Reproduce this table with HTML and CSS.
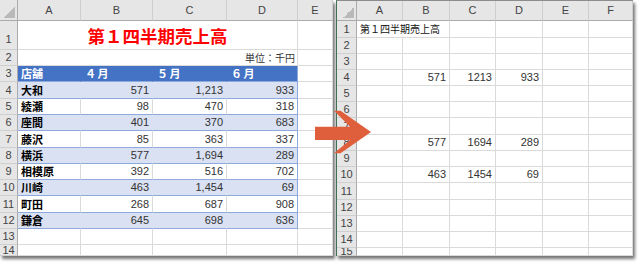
FILE: index.html
```html
<!DOCTYPE html>
<html lang="ja">
<head>
<meta charset="utf-8">
<title>第１四半期売上高</title>
<link rel="stylesheet" href="styles.css">
</head>
<body>
<div class="stage">
  <div class="sheet left">
    <div class="c h corner"></div><div class="c h">A</div><div class="c h">B</div><div class="c h">C</div><div class="c h">D</div><div class="c h">E</div>

    <div class="c rh bottom">1</div><div class="c title">第１四半期売上高</div><div class="c"></div>
    <div class="c rh">2</div><div class="c unit">単位：千円</div><div class="c"></div>
    <div class="c rh">3</div><div class="c tb">店舗</div><div class="c tb mo">４月</div><div class="c tb mo">５月</div><div class="c tb mo last">６月</div><div class="c"></div>

    <div class="c rh">4</div><div class="c band name">大和</div><div class="c band num">571</div><div class="c band num">1,213</div><div class="c band num last">933</div><div class="c"></div>
    <div class="c rh">5</div><div class="c wr name">綾瀬</div><div class="c wr num">98</div><div class="c wr num">470</div><div class="c wr num last">318</div><div class="c"></div>
    <div class="c rh">6</div><div class="c band name">座間</div><div class="c band num">401</div><div class="c band num">370</div><div class="c band num last">683</div><div class="c"></div>
    <div class="c rh">7</div><div class="c wr name">藤沢</div><div class="c wr num">85</div><div class="c wr num">363</div><div class="c wr num last">337</div><div class="c"></div>
    <div class="c rh">8</div><div class="c band name">横浜</div><div class="c band num">577</div><div class="c band num">1,694</div><div class="c band num last">289</div><div class="c"></div>
    <div class="c rh">9</div><div class="c wr name">相模原</div><div class="c wr num">392</div><div class="c wr num">516</div><div class="c wr num last">702</div><div class="c"></div>
    <div class="c rh">10</div><div class="c band name">川崎</div><div class="c band num">463</div><div class="c band num">1,454</div><div class="c band num last">69</div><div class="c"></div>
    <div class="c rh">11</div><div class="c wr name">町田</div><div class="c wr num">268</div><div class="c wr num">687</div><div class="c wr num last">908</div><div class="c"></div>
    <div class="c rh">12</div><div class="c band name">鎌倉</div><div class="c band num">645</div><div class="c band num">698</div><div class="c band num last">636</div><div class="c"></div>
    <div class="c rh">13</div><div class="c"></div><div class="c"></div><div class="c"></div><div class="c"></div><div class="c"></div>
    <div class="c rh">14</div><div class="c"></div><div class="c"></div><div class="c"></div><div class="c"></div><div class="c"></div>
  </div>

  <div class="sheet right">
    <div class="c h corner"></div><div class="c h">A</div><div class="c h">B</div><div class="c h">C</div><div class="c h">D</div><div class="c h">E</div><div class="c h">F</div>

    <div class="c rh">1</div><div class="c plain wide">第１四半期売上高</div><div class="c"></div><div class="c"></div><div class="c"></div><div class="c"></div>
    <div class="c rh">2</div><div class="c"></div><div class="c"></div><div class="c"></div><div class="c"></div><div class="c"></div><div class="c"></div>
    <div class="c rh">3</div><div class="c"></div><div class="c"></div><div class="c"></div><div class="c"></div><div class="c"></div><div class="c"></div>
    <div class="c rh">4</div><div class="c"></div><div class="c num">571</div><div class="c num">1213</div><div class="c num">933</div><div class="c"></div><div class="c"></div>
    <div class="c rh">5</div><div class="c"></div><div class="c"></div><div class="c"></div><div class="c"></div><div class="c"></div><div class="c"></div>
    <div class="c rh">6</div><div class="c"></div><div class="c"></div><div class="c"></div><div class="c"></div><div class="c"></div><div class="c"></div>
    <div class="c rh">7</div><div class="c"></div><div class="c"></div><div class="c"></div><div class="c"></div><div class="c"></div><div class="c"></div>
    <div class="c rh">8</div><div class="c"></div><div class="c num">577</div><div class="c num">1694</div><div class="c num">289</div><div class="c"></div><div class="c"></div>
    <div class="c rh">9</div><div class="c"></div><div class="c"></div><div class="c"></div><div class="c"></div><div class="c"></div><div class="c"></div>
    <div class="c rh">10</div><div class="c"></div><div class="c num">463</div><div class="c num">1454</div><div class="c num">69</div><div class="c"></div><div class="c"></div>
    <div class="c rh">11</div><div class="c"></div><div class="c"></div><div class="c"></div><div class="c"></div><div class="c"></div><div class="c"></div>
    <div class="c rh">12</div><div class="c"></div><div class="c"></div><div class="c"></div><div class="c"></div><div class="c"></div><div class="c"></div>
    <div class="c rh">13</div><div class="c"></div><div class="c"></div><div class="c"></div><div class="c"></div><div class="c"></div><div class="c"></div>
    <div class="c rh">14</div><div class="c"></div><div class="c"></div><div class="c"></div><div class="c"></div><div class="c"></div><div class="c"></div>
    <div class="c rh">15</div><div class="c"></div><div class="c"></div><div class="c"></div><div class="c"></div><div class="c"></div><div class="c"></div>
  </div>

  <svg class="arrow" width="58" height="44" viewBox="0 0 58 44" aria-hidden="true">
    <polygon points="1,16.7 36,16.7 20,0.7 26.5,0.7 57,22 26.5,43.3 20,43.3 36,30 1,30" fill="#df5f3c"/>
  </svg>
</div>
</body>
</html>
```

FILE: styles.css
```css
html, body {
  margin: 0;
  padding: 0;
  background: #ffffff;
}

body {
  font-family: "Liberation Sans", "Noto Sans CJK JP", sans-serif;
  font-size: 11px;
  color: #222;
}

.stage {
  position: relative;
  width: 640px;
  height: 264px;
  overflow: hidden;
  display: flex;
  align-items: flex-start;
  background: #ffffff;
}

.sheet {
  display: grid;
  height: 256px;
  box-sizing: border-box;
  background: #ffffff;
  overflow: hidden;
  box-shadow: 2px 3px 3px rgba(0, 0, 0, 0.55);
}

.left {
  width: 333px;
  grid-template-columns: 18px 63px 72px 74px 71px 35px;
  grid-template-rows: 21px 29px 16px 16px 17px 16px 16px 17px 16px 16px 16px 17px 16px 16px 1fr;
}

.right {
  margin-left: 3px;
  width: 297px;
  border-left: 1px solid #3f6f55;
  border-top: 1px solid #8c8c8c;
  grid-template-columns: 20px 46px 47px 46px 47px 46px 1fr;
  grid-template-rows: 20px 17px 16px 16px 16px 16px 16px 17px 16px 16px 16px 17px 16px 16px 16px 1fr;
}

.c {
  box-sizing: border-box;
  min-width: 0;
  display: flex;
  align-items: center;
  padding: 0 3px;
  border-right: 1px solid #dadada;
  border-bottom: 1px solid #dadada;
  white-space: nowrap;
  overflow: hidden;
  line-height: 1;
}

.h {
  background: #e6e6e6;
  color: #444;
  justify-content: center;
  border-right-color: #cfcfcf;
  border-bottom-color: #ababab;
}

.rh {
  background: #e6e6e6;
  color: #444;
  justify-content: center;
  padding: 0;
  border-right-color: #ababab;
  border-bottom-color: #cfcfcf;
}

.rh.bottom {
  align-items: flex-end;
  padding-bottom: 4px;
}

.corner {
  border-right-color: #ababab;
  background: linear-gradient(135deg, transparent 50%, #b9b9b9 50%) no-repeat right 2px bottom 2px / 11px 11px, #e6e6e6;
}

.title {
  grid-column: span 4;
  justify-content: center;
  align-items: flex-end;
  padding-bottom: 5px;
  font-family: "Noto Sans CJK JP", sans-serif;
  font-weight: bold;
  font-size: 17.5px;
  color: #ff0000;
  border-right-color: #dadada;
}

.unit {
  grid-column: span 4;
  justify-content: flex-end;
  padding-right: 2px;
  font-family: "Noto Sans CJK JP", sans-serif;
  font-size: 10px;
  color: #333;
}

.tb {
  background: #4472c4;
  color: #ffffff;
  font-family: "Noto Sans CJK JP", sans-serif;
  font-weight: bold;
  border-right-color: #4472c4;
  border-bottom-color: #8ea9db;
}

.mo {
  padding-left: 4px;
  letter-spacing: 1.5px;
}

.band {
  background: #d9e1f2;
  border-right-color: #d9e1f2;
  border-bottom-color: #8ea9db;
}

.wr {
  border-bottom-color: #8ea9db;
}

.last {
  border-right-color: #8ea9db;
}

.name {
  font-family: "Noto Sans CJK JP", sans-serif;
  font-weight: bold;
  color: #000;
}

.num {
  justify-content: flex-end;
  color: #333;
}

.plain {
  font-family: "Noto Sans CJK JP", sans-serif;
  font-size: 10px;
  color: #111;
}

.wide {
  grid-column: span 2;
}

.arrow {
  position: absolute;
  left: 314px;
  top: 110px;
}
```
